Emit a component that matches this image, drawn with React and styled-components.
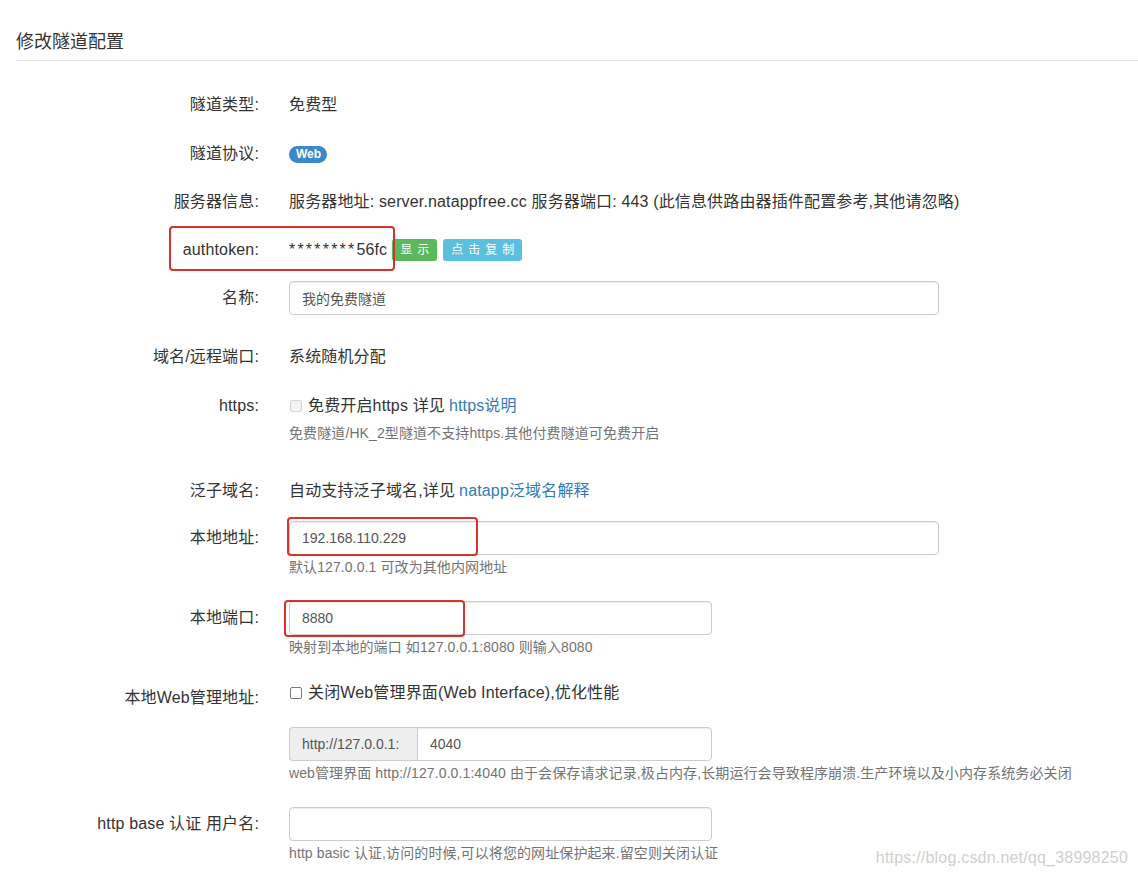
import React from "react";
import styled, { createGlobalStyle } from "styled-components";

const Global = createGlobalStyle`
  html, body { margin: 0; padding: 0; background: #fff; }
  body {
    font-family: "Liberation Sans", "Noto Sans CJK SC", sans-serif;
    color: #333;
  }
`;

const Page = styled.div`
  position: relative;
  width: 1138px;
  min-height: 879px;
  padding-left: 16px;
  box-sizing: border-box;
`;

const Header = styled.div`
  padding-top: 30px;
  padding-bottom: 6px;
  border-bottom: 1px solid #e5e5e5;
`;

const Title = styled.h3`
  margin: 0;
  font-size: 18px;
  font-weight: 400;
  line-height: 24px;
  color: #333;
`;

const Form = styled.div`
  display: flex;
  flex-direction: column;
`;

const Row = styled.div`
  position: relative;
  display: grid;
  grid-template-columns: 243px 650px;
  column-gap: 30px;
  margin-top: ${(p) => p.$mt}px;
`;

const Label = styled.div`
  text-align: right;
  font-size: 16px;
  line-height: 34px;
  padding-top: ${(p) => p.$pt || 0}px;
  color: #333;
  white-space: nowrap;
  letter-spacing: 0.15px;
`;

const Value = styled.div`
  position: relative;
  display: flex;
  flex-direction: column;
  align-items: flex-start;
`;

const Static = styled.div`
  display: flex;
  align-items: center;
  font-size: 16px;
  line-height: 34px;
  height: 34px;
  white-space: nowrap;
  letter-spacing: 0.15px;
`;

const Stars = styled.span`
  letter-spacing: 2.2px;
`;

const Link = styled.a`
  color: #337ab7;
  text-decoration: none;
  margin-left: 4px;
`;

const Badge = styled.span`
  display: inline-block;
  background: #3a89c9;
  color: #fff;
  font-size: 12px;
  font-weight: 700;
  line-height: 17px;
  padding: 0 6px 0 7px;
  border-radius: 9px;
  letter-spacing: 0;
`;

const Btn = styled.span`
  display: inline-block;
  background: ${(p) => p.$bg};
  color: #fff;
  font-size: 12px;
  line-height: 22px;
  height: 22px;
  padding: 0 3px 0 8px;
  letter-spacing: 5px;
  border-radius: 3px;
  margin-left: ${(p) => p.$ml}px;
`;

const Input = styled.input`
  box-sizing: border-box;
  width: ${(p) => p.$w}px;
  height: 34px;
  padding: 6px 12px;
  font-family: inherit;
  font-size: 14px;
  color: #555;
  background: #fff;
  border: 1px solid #ccc;
  border-radius: 4px;
  box-shadow: inset 0 1px 1px rgba(0, 0, 0, 0.075);
  outline: none;
`;

const Help = styled.div`
  margin-top: ${(p) => p.$mt || 0}px;
  font-size: 14px;
  line-height: 20px;
  color: #737373;
  white-space: nowrap;
  letter-spacing: 0.1px;
`;

const Check = styled.span`
  display: inline-block;
  box-sizing: border-box;
  width: 12px;
  height: 12px;
  margin: 0 6px 0 1px;
  border: 1px solid ${(p) => (p.$disabled ? "#d6d6d6" : "#777")};
  background: ${(p) => (p.$disabled ? "#f4f4f4" : "#fff")};
  border-radius: 2px;
`;

const Group = styled.div`
  display: flex;
  width: 423px;
  height: 34px;
`;

const Addon = styled.span`
  box-sizing: border-box;
  width: 128px;
  display: flex;
  align-items: center;
  padding: 0 12px;
  font-size: 14px;
  color: #555;
  background: #eee;
  border: 1px solid #ccc;
  border-right: none;
  border-radius: 4px 0 0 4px;
`;

const GroupInput = styled(Input)`
  flex: 1;
  border-radius: 0 4px 4px 0;
`;

const Mark = styled.div`
  position: absolute;
  left: ${(p) => p.$l}px;
  top: ${(p) => p.$t}px;
  width: ${(p) => p.$w}px;
  height: ${(p) => p.$h}px;
  box-sizing: border-box;
  border: 2px solid #d8322c;
  border-radius: 4px;
  pointer-events: none;
`;

const Watermark = styled.div`
  position: absolute;
  right: 10px;
  top: 849px;
  font-size: 16px;
  color: #cfcfcf;
  letter-spacing: 0.2px;
`;

export default function App() {
  return (
    <Page>
      <Global />
      <Header>
        <Title>修改隧道配置</Title>
      </Header>
      <Form>
        <Row $mt={27}>
          <Label>隧道类型:</Label>
          <Value>
            <Static>免费型</Static>
          </Value>
        </Row>
        <Row $mt={15}>
          <Label>隧道协议:</Label>
          <Value>
            <Static>
              <Badge>Web</Badge>
            </Static>
          </Value>
        </Row>
        <Row $mt={14}>
          <Label>服务器信息:</Label>
          <Value>
            <Static>
              服务器地址: server.natappfree.cc 服务器端口: 443 (此信息供路由器插件配置参考,其他请忽略)
            </Static>
          </Value>
        </Row>
        <Row $mt={14}>
          <Label>authtoken:</Label>
          <Value>
            <Static>
              <Stars>********</Stars>56fc
              <Btn $bg="#5cb85c" $ml={5}>显示</Btn>
              <Btn $bg="#5bc0de" $ml={6}>点击复制</Btn>
            </Static>
          </Value>
          <Mark $l={153} $t={-7} $w={226} $h={45} />
        </Row>
        <Row $mt={14}>
          <Label>名称:</Label>
          <Value>
            <Input $w={650} defaultValue="我的免费隧道" />
          </Value>
        </Row>
        <Row $mt={25}>
          <Label>域名/远程端口:</Label>
          <Value>
            <Static>系统随机分配</Static>
          </Value>
        </Row>
        <Row $mt={15}>
          <Label>https:</Label>
          <Value>
            <Static>
              <Check $disabled />
              免费开启https 详见<Link>https说明</Link>
            </Static>
            <Help>免费隧道/HK_2型隧道不支持https.其他付费隧道可免费开启</Help>
          </Value>
        </Row>
        <Row $mt={31}>
          <Label>泛子域名:</Label>
          <Value>
            <Static>
              自动支持泛子域名,详见<Link>natapp泛域名解释</Link>
            </Static>
          </Value>
        </Row>
        <Row $mt={13}>
          <Label>本地地址:</Label>
          <Value>
            <Input $w={650} defaultValue="192.168.110.229" />
            <Help $mt={2}>默认127.0.0.1 可改为其他内网地址</Help>
            <Mark $l={-2} $t={-4} $w={191} $h={39} />
          </Value>
        </Row>
        <Row $mt={24}>
          <Label>本地端口:</Label>
          <Value>
            <Input $w={423} defaultValue="8880" />
            <Help $mt={2}>映射到本地的端口 如127.0.0.1:8080 则输入8080</Help>
            <Mark $l={-5} $t={-1} $w={181} $h={37} />
          </Value>
        </Row>
        <Row $mt={19}>
          <Label $pt={5}>本地Web管理地址:</Label>
          <Value>
            <Static>
              <Check />
              关闭Web管理界面(Web Interface),优化性能
            </Static>
          </Value>
        </Row>
        <Row $mt={12}>
          <Label />
          <Value>
            <Group>
              <Addon>http://127.0.0.1:</Addon>
              <GroupInput defaultValue="4040" />
            </Group>
            <Help $mt={2}>
              web管理界面 http://127.0.0.1:4040 由于会保存请求记录,极占内存,长期运行会导致程序崩溃.生产环境以及小内存系统务必关闭
            </Help>
          </Value>
        </Row>
        <Row $mt={24}>
          <Label>http base 认证 用户名:</Label>
          <Value>
            <Input $w={423} defaultValue="" />
            <Help $mt={2}>http basic 认证,访问的时候,可以将您的网址保护起来.留空则关闭认证</Help>
          </Value>
        </Row>
      </Form>
      <Watermark>https://blog.csdn.net/qq_38998250</Watermark>
    </Page>
  );
}
